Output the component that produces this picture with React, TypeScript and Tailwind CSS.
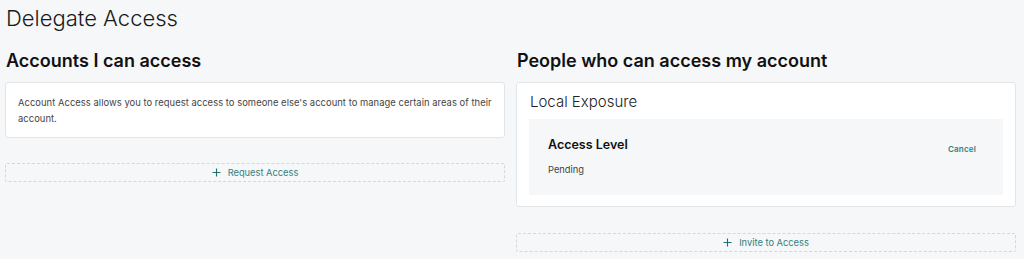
import React from "react";

function Plus() {
  return (
    <svg width="9" height="9" viewBox="0 0 9 9" className="shrink-0">
      <path d="M4.5 0.5v8M0.5 4.5h8" stroke="#1f6f6f" strokeWidth="1.1" fill="none" />
    </svg>
  );
}

function DashedButton({ label }: { label: string }) {
  return (
    <div className="h-[19px] border border-dashed border-[#d4d8db] rounded-[2px] flex items-center justify-center gap-[7px] text-[9.3px] text-[#337f80]">
      <Plus />
      <span>{label}</span>
    </div>
  );
}

export default function App() {
  return (
    <div
      className="w-[1024px] h-[259px] bg-[#f5f7f8] text-[#111] overflow-hidden pl-[5px]"
      style={{ fontFamily: "Inter, 'Noto Sans', sans-serif" }}
    >
      <h1 className="text-[22px] font-light leading-[28px] pt-[4px] pl-[1px] text-[#1a1a1a]">Delegate Access</h1>
      <div className="grid grid-cols-[500px_500px] gap-[11px] mt-[18px]">
        <div className="flex flex-col">
          <h2 className="text-[18px] font-semibold leading-[22px] pl-[1px] text-[#111]">Accounts I can access</h2>
          <div className="mt-[10px] h-[56px] bg-white border border-[#e3e6e8] rounded-[3px] px-[12px] pt-[12px] text-[9.4px] leading-[16px] text-[#444] tracking-[0.05px]">
            Account Access allows you to request access to someone else's account to manage certain areas of their account.
          </div>
          <div className="mt-[25px]">
            <DashedButton label="Request Access" />
          </div>
        </div>
        <div className="flex flex-col">
          <h2 className="text-[18px] font-semibold leading-[22px] pl-[1px] text-[#111]">People who can access my account</h2>
          <div className="mt-[10px] h-[125px] bg-white border border-[#e3e6e8] rounded-[3px] px-[12px] pt-[9px]">
            <div className="text-[15px] font-light leading-[20px] text-[#222] pl-[1px]">Local Exposure</div>
            <div className="mt-[7px] h-[76px] bg-[#f5f7f8] flex justify-between pl-[19px] pr-[27px] pt-[18px]">
              <div className="flex flex-col">
                <div className="text-[12.5px] font-semibold leading-[16px] text-[#111]">Access Level</div>
                <div className="mt-[11px] text-[9.3px] leading-[12px] text-[#444]">Pending</div>
              </div>
              <div className="text-[8px] font-semibold text-[#337f80] pt-[6px] tracking-[0.2px]">Cancel</div>
            </div>
          </div>
          <div className="mt-[26px]">
            <DashedButton label="Invite to Access" />
          </div>
        </div>
      </div>
    </div>
  );
}
